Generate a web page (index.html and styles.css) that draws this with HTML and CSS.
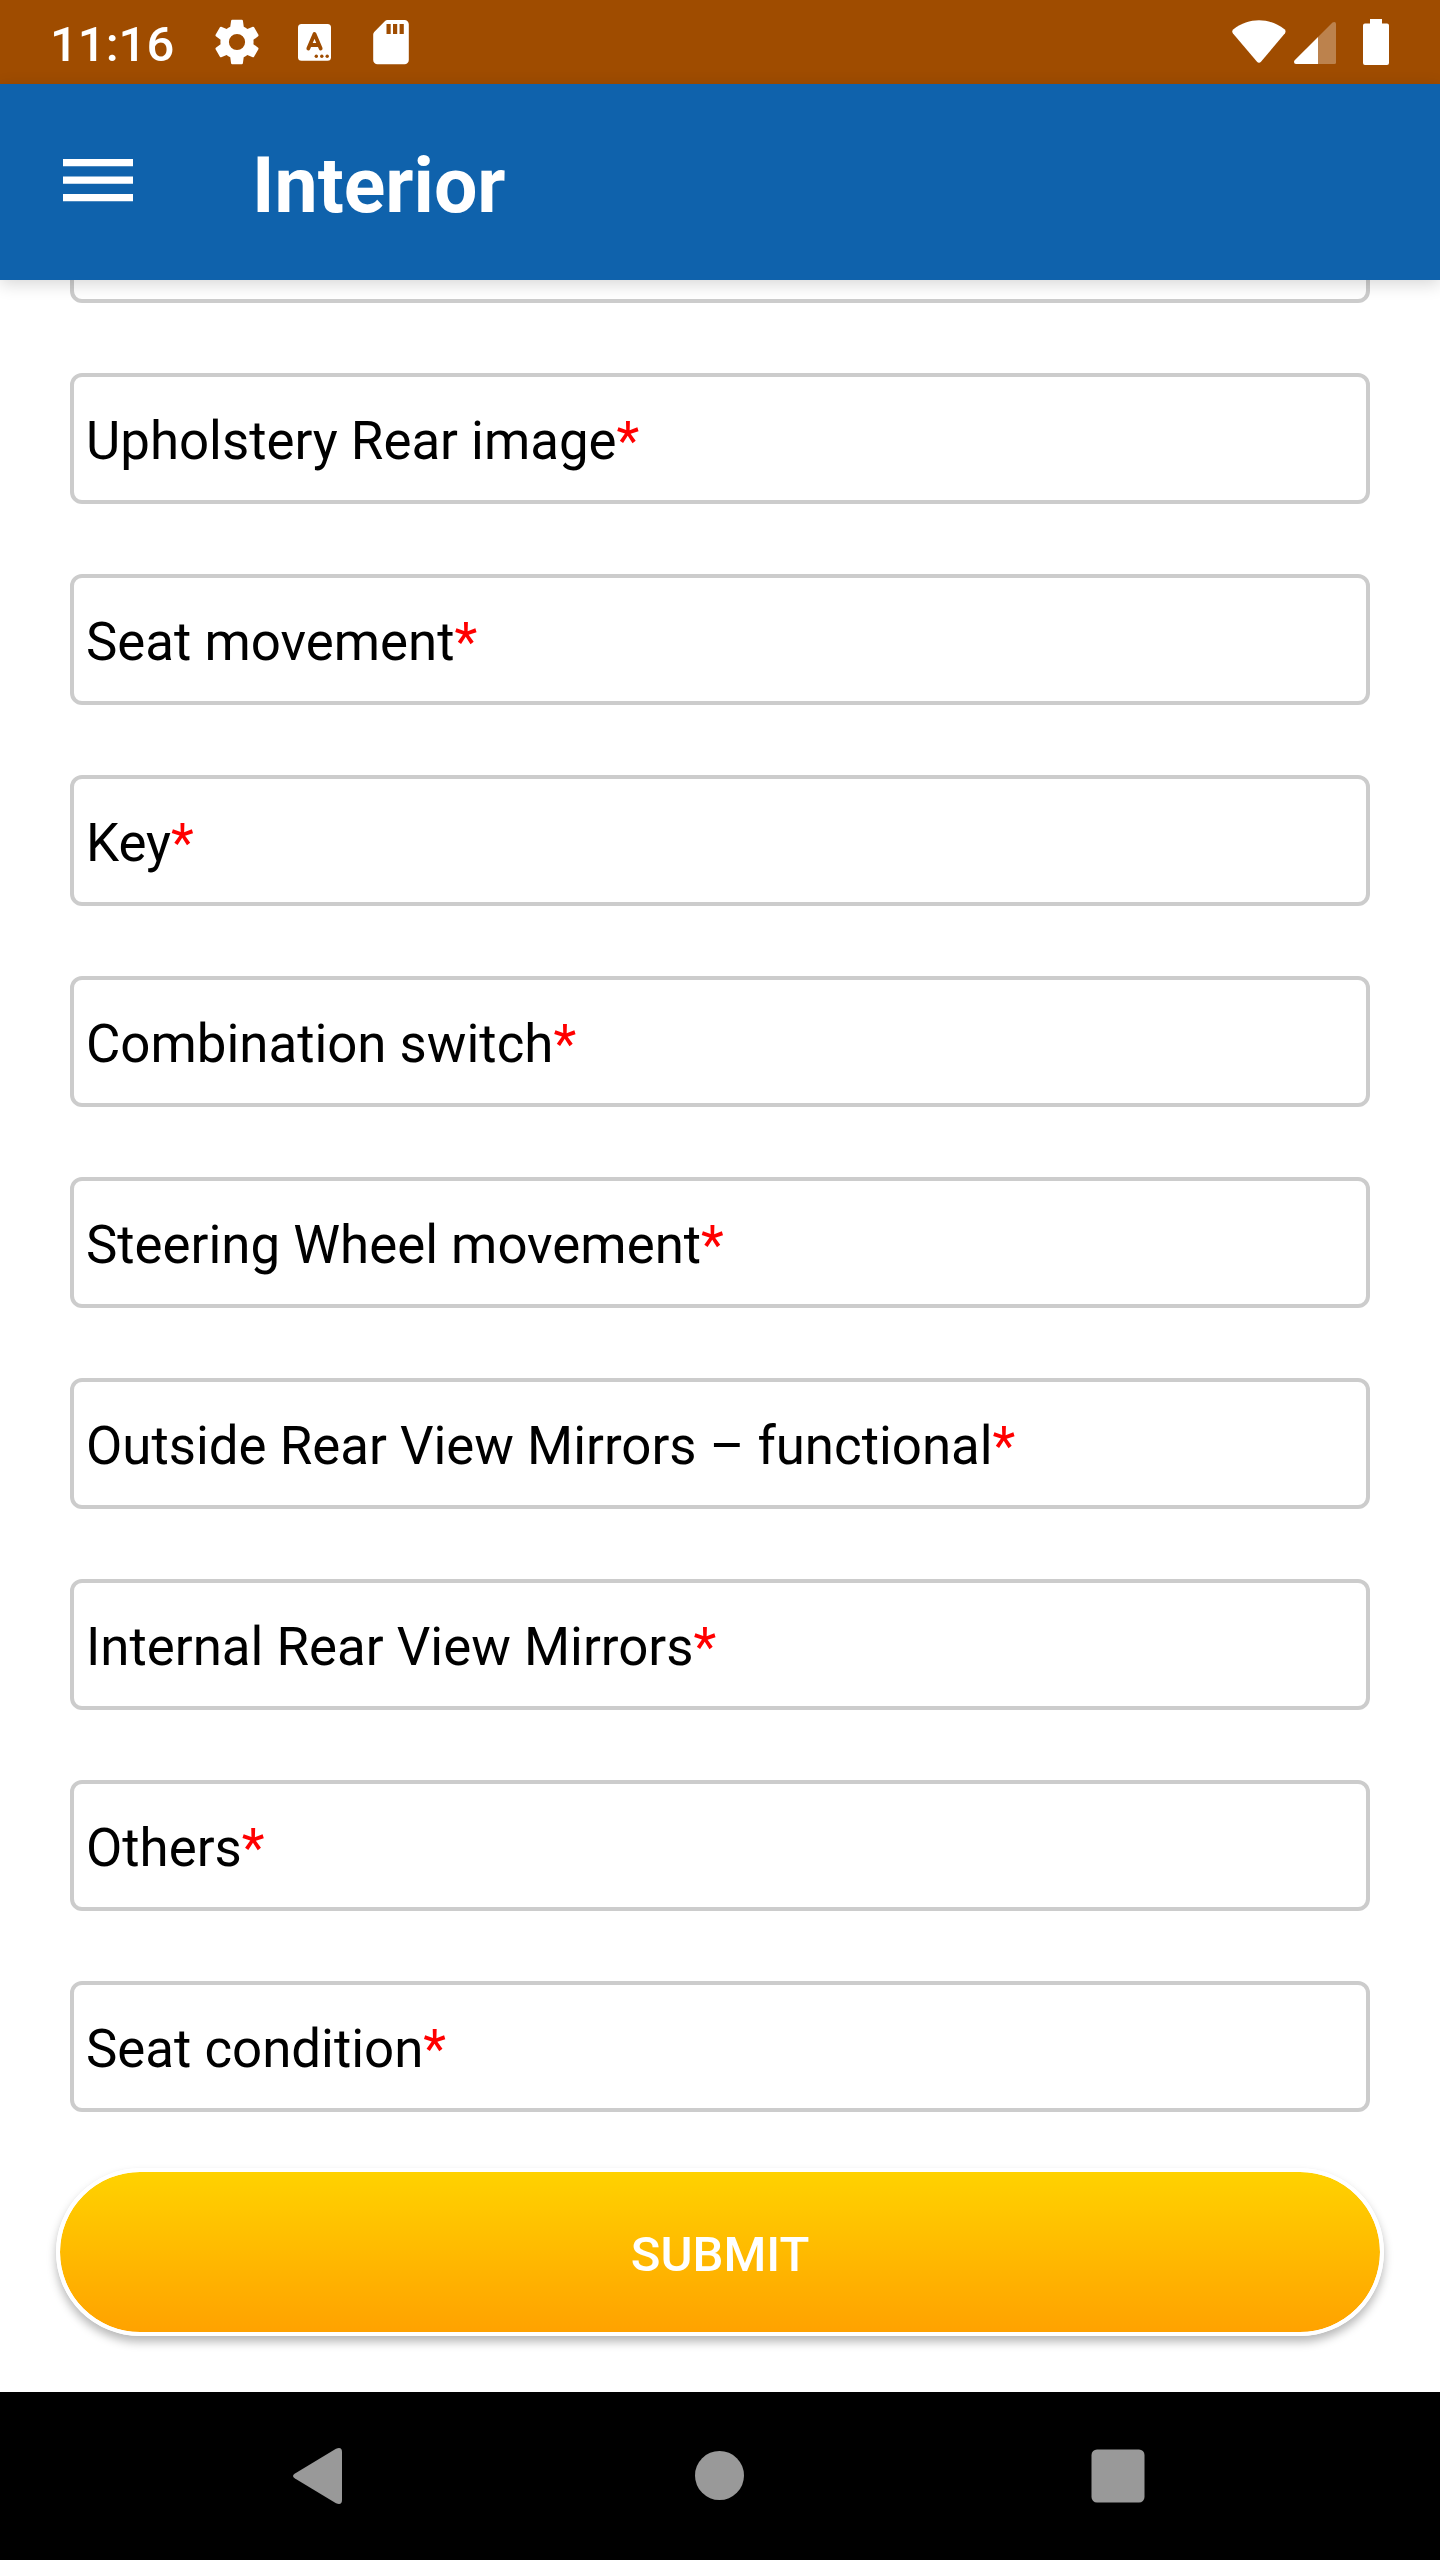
FILE: index.html
```html
<!DOCTYPE html>
<html lang="en">
<head>
<meta charset="utf-8">
<title>Interior</title>
<link rel="stylesheet" href="styles.css">
</head>
<body>
<div class="screen">
  <div class="status-bar">
    <div class="status-group">
      <span class="clock">11:16</span>
      <svg class="icon-gear" width="54" height="54" viewBox="0 0 24 24" fill="#fff"><path d="M21.4 14.6l-2.1-1.65a7.5 7.5 0 0 0 0-1.9l2.1-1.65c.18-.14.23-.41.12-.61l-1.92-3.32c-.12-.22-.37-.29-.59-.22l-2.39.96c-.5-.38-1.03-.7-1.62-.94l-.36-2.74c-.04-.24-.24-.41-.48-.41h-4.3c-.24 0-.44.17-.48.41L9 5.27c-.59.24-1.13.57-1.62.94l-2.39-.96c-.22-.08-.47 0-.59.22L2.48 8.79c-.12.21-.06.47.12.61l2.1 1.65a7.5 7.5 0 0 0 0 1.9l-2.1 1.65c-.18.14-.23.41-.12.61l1.92 3.32c.12.22.37.29.59.22l2.39-.96c.5.38 1.03.7 1.62.94l.36 2.74c.04.24.24.41.48.41h4.3c.24 0 .44-.17.48-.41l.36-2.74c.59-.24 1.13-.56 1.62-.94l2.39.96c.22.08.47 0 .59-.22l1.92-3.32c.12-.22.07-.47-.12-.61zM12 15.6a3.6 3.6 0 1 1 0-7.2 3.6 3.6 0 0 1 0 7.2z"/></svg>
      <svg class="icon-keyboard" width="34" height="37" viewBox="0 0 34 37"><rect width="33" height="36.7" rx="3.5" fill="#fff"/><path d="M10.3 24.5 16.5 10 22.7 24.5M12.5 21h8" fill="none" stroke="#9f4c00" stroke-width="3.8" stroke-linecap="round" stroke-linejoin="round"/><g fill="#9f4c00"><circle cx="18.3" cy="32.3" r="1.7"/><circle cx="23.8" cy="32.3" r="1.7"/><circle cx="29.2" cy="32.3" r="1.7"/></g></svg>
      <svg class="icon-sd" width="36" height="45" viewBox="0 0 36 45"><path fill="#fff" fill-rule="evenodd" d="M14.5 0H31.5a4.3 4.3 0 0 1 4.3 4.3V40a4.3 4.3 0 0 1-4.3 4.3H4.5A4.3 4.3 0 0 1 .2 40V14.5q0-1.5 1-2.5L11.8 1.2Q13 0 14.5 0zM13.5 4v10h4.2V4zM20 4v10h4.2V4zM26.6 4v10h4.2V4z"/></svg>
    </div>
    <div class="status-group">
      <svg width="54" height="44" viewBox="0 0 54 44"><path fill="#fff" d="M1 13.5Q-.7 11 1.5 9.2C17-2.7 37-2.7 52.5 9.2Q54.3 11 53 13.2L29.2 41.5Q27 44 24.8 41.5z"/></svg>
      <svg class="icon-signal" width="42" height="42" viewBox="0 0 42 42"><path fill="#fff" fill-opacity=".3" d="M24 15V42H40.5Q42 42 42 40.5V1.8Q42 0 40.3 0 39.3 0 38.5.6z"/><path fill="#fff" d="M24 15V42H2Q0 42 0 40 0 39 .7 38.3z"/></svg>
      <svg class="icon-battery" width="26" height="46" viewBox="0 0 26 46"><path fill="#fff" d="M7 0H19V4.5H24Q26 4.5 26 6.5V44Q26 46 24 46H2Q0 46 0 44V6.5Q0 4.5 2 4.5H7z"/></svg>
    </div>
  </div>
  <header class="app-bar">
    <svg class="menu" width="70" height="43" viewBox="0 0 70 43" fill="#fff"><path d="M0 0H70V7.3H0zM0 17.5H70V24.8H0zM0 35H70V42.3H0z"/></svg>
    <h1 class="title">Interior</h1>
  </header>
  <main class="content">
    <div class="field"></div>
    <div class="field">Upholstery Rear image<span class="required">*</span></div>
    <div class="field">Seat movement<span class="required">*</span></div>
    <div class="field">Key<span class="required">*</span></div>
    <div class="field">Combination switch<span class="required">*</span></div>
    <div class="field">Steering Wheel movement<span class="required">*</span></div>
    <div class="field">Outside Rear View Mirrors – functional<span class="required">*</span></div>
    <div class="field">Internal Rear View Mirrors<span class="required">*</span></div>
    <div class="field">Others<span class="required">*</span></div>
    <div class="field">Seat condition<span class="required">*</span></div>
    <button class="submit">SUBMIT</button>
  </main>
  <nav class="nav-bar">
    <svg width="49" height="56" viewBox="0 0 49 56" fill="#999"><path d="M2 25.5 43 .8Q49-1.5 49 4V52Q49 57.5 43 55.2L2 30.5Q-2 28 2 25.5z"/></svg>
    <svg class="nav-home" width="49" height="49" viewBox="0 0 49 49" fill="#999"><circle cx="24.5" cy="24.5" r="24.5"/></svg>
    <svg class="nav-recent" width="54" height="54" viewBox="0 0 54 54" fill="#999"><rect x=".5" y=".5" width="53" height="53" rx="5.5"/></svg>
  </nav>
</div>
</body>
</html>
```
FILE: styles.css
```css
* { box-sizing: border-box; }

body {
  margin: 0;
  background: #fff;
  font-family: Roboto, sans-serif;
}

svg { display: block; flex: none; }

.screen {
  width: 1440px;
  height: 2560px;
  display: flex;
  flex-direction: column;
  overflow: hidden;
  background: #fff;
}

.status-bar {
  flex: none;
  height: 84px;
  padding: 0 51px 0 50px;
  display: flex;
  justify-content: space-between;
  align-items: center;
  background: #9f4c00;
}

.status-group {
  display: flex;
  align-items: center;
}

.clock {
  width: 160px;
  padding-top: 4px;
  font-size: 49px;
  line-height: 57px;
  font-weight: 500;
  color: #fff;
}

.icon-keyboard { margin-left: 34px; }
.icon-sd { margin-left: 41px; }
.icon-signal { margin: 2px 0 0 8px; }
.icon-battery { margin-left: 27px; }

.app-bar {
  flex: none;
  position: relative;
  z-index: 1;
  height: 196px;
  padding: 0 63px;
  display: flex;
  align-items: center;
  background: #0f62ac;
  box-shadow: 0 4px 16px rgba(0, 0, 0, 0.16);
}

.menu { margin-bottom: 3px; }

.title {
  margin: 8px 0 0 119px;
  font-size: 77px;
  line-height: 90px;
  font-weight: 700;
  color: #fff;
}

.content {
  flex: none;
  height: 2112px;
  padding: 0 70px;
  display: flex;
  flex-direction: column;
  gap: 70px;
  overflow: hidden;
}

.field {
  flex: none;
  height: 131px;
  padding: 5px 12px 0;
  display: flex;
  align-items: center;
  border: 4px solid #ccc;
  border-radius: 12px;
  font-size: 52.8px;
  line-height: 62px;
  color: #000;
}

/* the list is scrolled: only the end of the first field shows */
.field:first-child { margin-top: -108px; }

.required { color: #f00; }

.submit {
  flex: none;
  height: 168px;
  margin: -14px -14px 0;
  padding: 4px 0 0;
  border: 4px solid #fff;
  border-radius: 84px;
  background: linear-gradient(#ffd200, #ffa200) padding-box;
  box-shadow: 0 6px 10px rgba(0, 0, 0, 0.28), 0 0 1px rgba(0, 0, 0, 0.06);
  font-family: inherit;
  font-size: 49px;
  font-weight: 500;
  color: #fff;
}

.nav-bar {
  flex: none;
  height: 168px;
  padding: 0 295px 1px 293px;
  display: flex;
  align-items: center;
  background: #000;
}

.nav-home { margin-left: 353px; }
.nav-recent { margin-left: 347px; }
```
